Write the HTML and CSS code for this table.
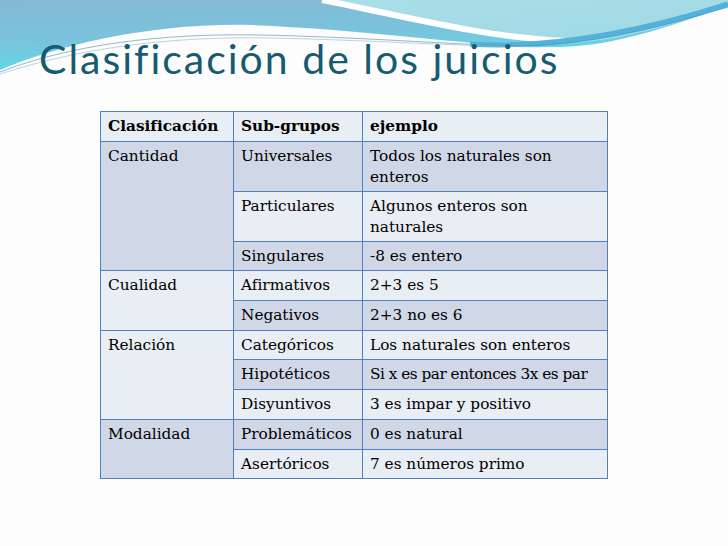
FILE: index.html
```html
<!DOCTYPE html>
<html lang="es">
<head>
<meta charset="utf-8">
<title>Clasificación de los juicios</title>
<link rel="stylesheet" href="styles.css">
</head>
<body>
<div class="slide">
  <svg class="wave" width="728" height="90" viewBox="0 0 728 90" aria-hidden="true">
    <defs>
      <linearGradient id="gBlue" x1="0" y1="0" x2="0.3" y2="1">
        <stop offset="0" stop-color="#86b8d3"/>
        <stop offset="0.55" stop-color="#79c3dc"/>
        <stop offset="1" stop-color="#5fdbea"/>
      </linearGradient>
      <linearGradient id="gCyan" x1="0" y1="0" x2="1" y2="1">
        <stop offset="0" stop-color="#a9dfe7"/>
        <stop offset="1" stop-color="#9fd8e6"/>
      </linearGradient>
    </defs>
    <path d="M0,0 H728 V6 C680,22 620,46 560,47 C480,48 380,30 250,25 C150,23 60,45 0,70 Z" fill="url(#gBlue)"/>
    <path d="M322,0 H728 V6 C680,22 620,43 560,43 C480,42 400,15 322,0 Z" fill="url(#gCyan)"/>
    <path d="M322,0 C400,15 480,37 565,41" fill="none" stroke="#ffffff" stroke-width="6"/>
    <path d="M470,44 C560,50 660,26 728,4" fill="none" stroke="#52b2da" stroke-width="5"/>
    <path d="M500,46 C590,48 670,24 728,7" fill="none" stroke="#3a9cc8" stroke-width="0.8"/>
    <path d="M0,72 C70,45 160,33 260,35 C360,37 440,44 520,46" fill="none" stroke="#6a9ab0" stroke-width="0.7"/>
    <path d="M0,74 C80,48 170,36 270,38 C370,40 450,46 540,47" fill="none" stroke="#8ab8c8" stroke-width="0.6"/>
  </svg>
  <h1 class="title">Clasificación de los juicios</h1>
  <table class="grid">
    <thead>
      <tr><th class="c1">Clasificación</th><th class="c2">Sub-grupos</th><th class="c3">ejemplo</th></tr>
    </thead>
    <tbody>
      <tr class="dark tall"><td rowspan="3">Cantidad</td><td>Universales</td><td>Todos los naturales son<br>enteros</td></tr>
      <tr class="light tall"><td>Particulares</td><td>Algunos enteros son<br>naturales</td></tr>
      <tr class="dark"><td>Singulares</td><td>-8 es entero</td></tr>
      <tr class="light"><td rowspan="2">Cualidad</td><td>Afirmativos</td><td>2+3 es 5</td></tr>
      <tr class="dark"><td>Negativos</td><td>2+3 no es 6</td></tr>
      <tr class="light"><td rowspan="3">Relación</td><td>Categóricos</td><td>Los naturales son enteros</td></tr>
      <tr class="dark"><td>Hipotéticos</td><td class="tight">Si x es par entonces 3x es par</td></tr>
      <tr class="light"><td>Disyuntivos</td><td>3 es impar y positivo</td></tr>
      <tr class="dark"><td rowspan="2">Modalidad</td><td>Problemáticos</td><td>0 es natural</td></tr>
      <tr class="light"><td>Asertóricos</td><td>7 es números primo</td></tr>
    </tbody>
  </table>
</div>
</body>
</html>
```

FILE: styles.css
```css
* { box-sizing: border-box; }
html, body { margin: 0; padding: 0; background: #ffffff; }
.slide {
  position: relative;
  width: 728px;
  height: 546px;
  overflow: hidden;
  background: #fdfdfd;
  padding-top: 37px;
}
.wave {
  position: absolute;
  left: 0;
  top: 0;
  z-index: 0;
}
.title {
  position: relative;
  z-index: 1;
  margin: 0 0 0 39px;
  height: 44px;
  font-family: Lato, "Open Sans", sans-serif;
  font-weight: 400;
  font-size: 41px;
  line-height: 44px;
  letter-spacing: 2px;
  color: #175b73;
  white-space: nowrap;
}
.grid {
  position: relative;
  z-index: 1;
  margin: 30px 0 0 100px;
  width: 507px;
  border-collapse: collapse;
  table-layout: fixed;
  font-family: "DejaVu Serif", serif;
  font-size: 15.3px;
  line-height: 21px;
  color: #000;
}
.grid th, .grid td {
  border: 1px solid #4f81bd;
  padding: 4px 4px 3px 7px;
  text-align: left;
  vertical-align: top;
  white-space: nowrap;
}
.grid th { font-weight: 700; background: #e9edf4; height: 29.7px; }
.c1 { width: 133px; }
.c2 { width: 129px; }
.c3 { width: 245px; }
.dark td { background: #d0d8e8; }
.light td { background: #e9edf4; }
.grid tr td { height: 29.7px; }
.grid tr.tall td { height: 50px; }
.grid tr.tall td[rowspan] { height: auto; }
.grid td.tight { letter-spacing: -0.5px; }
```
